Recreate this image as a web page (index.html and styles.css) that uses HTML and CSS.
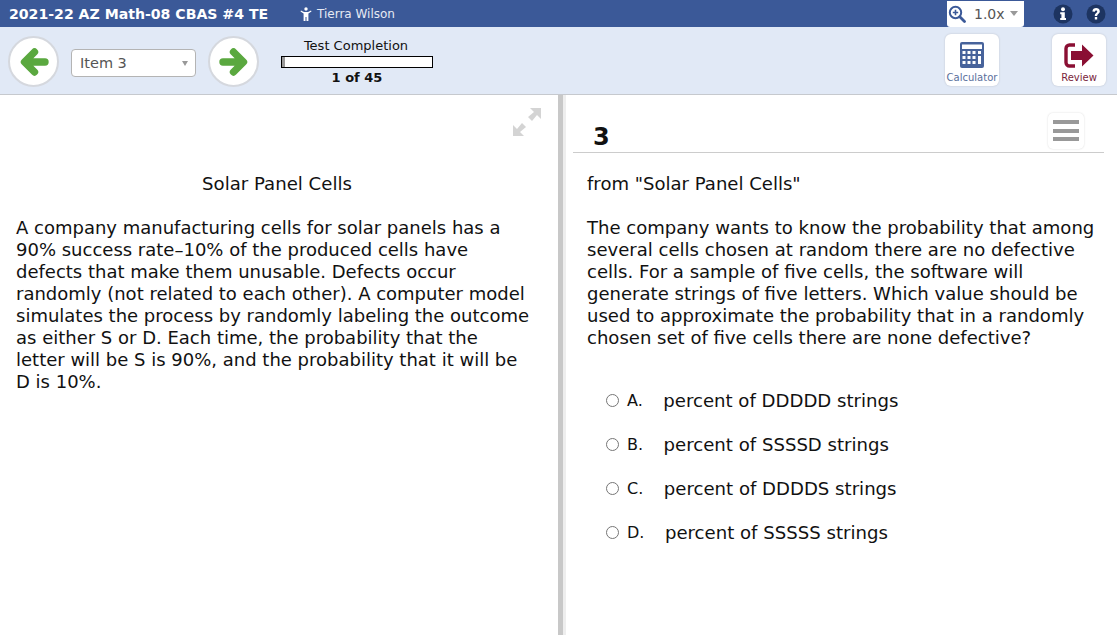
FILE: index.html
```html
<!DOCTYPE html>
<html lang="en">
<head>
    <meta charset="UTF-8">
    <meta name="viewport" content="width=device-width, initial-scale=1.0">
    <title>Test Item</title>
    <link rel="stylesheet" href="styles.css">
</head>
<body>
    <header class="topbar">
        <div class="test-name">2021-22 AZ Math-08 CBAS #4 TE</div>
        <div class="student">
            <svg class="student-icon" viewBox="0 0 12 14" width="12" height="14"><circle cx="6" cy="2" r="1.7" fill="#fff"/><path d="M1 3.5 L4 5 H8 L11 3.5 L11.5 4.6 L8.4 6.6 V9 L8.4 14 H6.5 V10 H5.5 V14 H3.6 V6.6 L0.5 4.6 Z" fill="#fff"/></svg>
            <span>Tierra Wilson</span>
        </div>
        <div class="zoom-box">
            <svg viewBox="0 0 18 18" width="18" height="18"><circle cx="7.5" cy="7.5" r="5.7" fill="none" stroke="#3b5998" stroke-width="2"/><path d="M11.8 11.8 L16.5 16.5" stroke="#3b5998" stroke-width="2.8" stroke-linecap="round"/><path d="M7.5 4.8 V10.2 M4.8 7.5 H10.2" stroke="#3b5998" stroke-width="1.6"/></svg>
            <span class="zoom-value">1.0x</span>
            <span class="caret"></span>
        </div>
        <div class="help-icons">
            <svg viewBox="0 0 20 20" width="20" height="20"><circle cx="10" cy="10" r="9.5" fill="#1d3461"/><circle cx="10" cy="5.2" r="2" fill="#fff"/><path d="M7.2 8.2 H11.8 V14 H13 V16 H7.2 V14 H8.4 V10.2 H7.2 Z" fill="#fff"/></svg>
            <svg viewBox="0 0 20 20" width="20" height="20"><circle cx="10" cy="10" r="9.5" fill="#1d3461"/><path d="M6.4 7.4 C6.4 2.9 13.8 2.9 13.8 7.3 C13.8 10 11.2 9.8 11.2 12 H8.8 C8.8 8.8 11.2 9 11.2 7.4 C11.2 6 9 6 8.9 7.8 Z" fill="#fff"/><rect x="8.8" y="13" width="2.4" height="2.5" fill="#fff"/></svg>
        </div>
    </header>

    <div class="toolbar">
        <button class="nav-btn" type="button">
            <svg viewBox="0 0 30 30" width="30" height="30"><path d="M15.5 5 L5.5 15 L15.5 25 M6 15 H26" fill="none" stroke="#5aa83f" stroke-width="7.4" stroke-linejoin="round" stroke-linecap="round"/></svg>
        </button>
        <div class="item-select">
            <span>Item 3</span>
            <span class="caret"></span>
        </div>
        <button class="nav-btn" type="button">
            <svg viewBox="0 0 30 30" width="30" height="30"><path d="M14.5 5 L24.5 15 L14.5 25 M24 15 H4" fill="none" stroke="#5aa83f" stroke-width="7.4" stroke-linejoin="round" stroke-linecap="round"/></svg>
        </button>
        <div class="completion">
            <div class="completion-label">Test Completion</div>
            <div class="completion-bar"><div class="completion-fill"></div></div>
            <div class="completion-count">1 of 45</div>
        </div>
        <div class="tool-btn calculator">
            <svg viewBox="0 0 24 26" width="24" height="26">
                <path d="M2 0 H22 A2 2 0 0 1 24 2 V24 A2 2 0 0 1 22 26 H2 A2 2 0 0 1 0 24 V2 A2 2 0 0 1 2 0 Z" fill="#47639b"/>
                <rect x="2" y="2.5" width="20" height="4.5" fill="#fff"/>
                <g fill="#fff">
                    <rect x="2.5" y="9" width="3" height="3"/><rect x="7.5" y="9" width="3" height="3"/><rect x="12.5" y="9" width="3" height="3"/><rect x="18" y="9" width="3" height="3"/>
                    <rect x="2.5" y="14" width="3" height="3"/><rect x="7.5" y="14" width="3" height="3"/><rect x="12.5" y="14" width="3" height="3"/><rect x="18" y="14" width="3" height="8"/>
                    <rect x="2.5" y="19" width="3" height="3"/><rect x="7.5" y="19" width="3" height="3"/><rect x="12.5" y="19" width="3" height="3"/>
                </g>
            </svg>
            <span>Calculator</span>
        </div>
        <div class="tool-btn review">
            <svg viewBox="0 0 30 26" width="30" height="26">
                <path d="M11 3 H5.5 A3.5 3.5 0 0 0 2 6.5 V20.5 A3.5 3.5 0 0 0 5.5 24 H11" fill="none" stroke="#8a0f33" stroke-width="3.4"/>
                <path d="M7 9 H18 V2.5 L29.5 13.5 L18 24.5 V18 H7 Z" fill="#8a0f33"/>
            </svg>
            <span>Review</span>
        </div>
    </div>

    <main class="panes">
        <section class="passage">
            <div class="expand-row">
                <svg viewBox="0 0 30 30" width="30" height="30"><g fill="#d4d4d4"><path d="M29 1 V12 L25 8 L20 14 L16 10 L22 5 L18 1 Z"/><path d="M1 29 V18 L5 22 L10 16 L14 20 L8 25 L12 29 Z"/></g></svg>
            </div>
            <h2 class="passage-title">Solar Panel Cells</h2>
            <p class="passage-text">A company manufacturing cells for solar panels has a 90% success rate–10% of the produced cells have defects that make them unusable. Defects occur randomly (not related to each other). A computer model simulates the process by randomly labeling the outcome as either S or D. Each time, the probability that the letter will be S is 90%, and the probability that it will be D is 10%.</p>
        </section>
        <div class="divider"></div>
        <section class="question">
            <div class="question-head">
                <span class="question-number">3</span>
                <div class="menu-btn"><span></span><span></span><span></span></div>
            </div>
            <p class="question-source">from "Solar Panel Cells"</p>
            <p class="question-text">The company wants to know the probability that among several cells chosen at random there are no defective cells. For a sample of five cells, the software will generate strings of five letters. Which value should be used to approximate the probability that in a randomly chosen set of five cells there are none defective?</p>
            <ul class="choices">
                <li class="choice"><span class="radio"></span><span class="letter">A.</span><span>percent of DDDDD strings</span></li>
                <li class="choice"><span class="radio"></span><span class="letter">B.</span><span>percent of SSSSD strings</span></li>
                <li class="choice"><span class="radio"></span><span class="letter">C.</span><span>percent of DDDDS strings</span></li>
                <li class="choice"><span class="radio"></span><span class="letter">D.</span><span>percent of SSSSS strings</span></li>
            </ul>
        </section>
    </main>
</body>
</html>
```

FILE: styles.css
```css
* {
    box-sizing: border-box;
}
html, body {
    height: 100%;
}
body {
    margin: 0;
    display: flex;
    flex-direction: column;
    height: 635px;
    overflow: hidden;
    background-color: #fff;
    color: #111;
    font-family: "DejaVu Sans", Verdana, sans-serif;
}

/* top bar */
.topbar {
    display: flex;
    align-items: center;
    height: 27px;
    padding-left: 9px;
    background-color: #3b5998;
    color: #fff;
}
.test-name {
    width: 291px;
    font-size: 14.1px;
    font-weight: bold;
}
.student {
    display: flex;
    align-items: center;
    gap: 5px;
    font-size: 12px;
    color: #e6eaf4;
}
.zoom-box {
    display: flex;
    align-items: center;
    width: 77px;
    height: 26px;
    margin-left: auto;
    margin-right: 29px;
    padding-left: 1px;
    background-color: #fff;
    border-radius: 0 0 3px 3px;
    color: #555;
    font-size: 14px;
}
.zoom-value {
    margin-left: 8px;
    margin-right: 5px;
}
.caret {
    width: 0;
    height: 0;
    border-left: 4px solid transparent;
    border-right: 4px solid transparent;
    border-top: 5px solid #999;
}
.help-icons {
    display: flex;
    gap: 13px;
    margin-right: 11px;
}

/* tool bar */
.toolbar {
    display: flex;
    align-items: center;
    height: 68px;
    padding-left: 8px;
    background-color: #e1e9f6;
    border-bottom: 1px solid #c6c9ce;
}
.nav-btn {
    display: flex;
    align-items: center;
    justify-content: center;
    width: 51px;
    height: 51px;
    margin-top: 2px;
    padding: 0;
    background-color: #fff;
    border: 2px solid #d5d8de;
    border-radius: 50%;
}
.item-select {
    display: flex;
    align-items: center;
    justify-content: space-between;
    width: 125px;
    height: 28px;
    margin: 4px 12px 0;
    padding: 1px 7px 0 8px;
    background-color: #fff;
    border: 1px solid #b4b4b4;
    border-radius: 4px;
    color: #555;
    font-size: 14.5px;
}
.item-select .caret {
    border-left-width: 3.5px;
    border-right-width: 3.5px;
    border-top-width: 5px;
}
.completion {
    width: 152px;
    margin-top: 3px;
    margin-left: 22px;
    text-align: center;
    font-size: 13px;
}
.completion-label {
    padding-right: 2px;
    line-height: 16px;
}
.completion-bar {
    height: 12px;
    margin: 2px 0 1px;
    background-color: #fff;
    border: 1px solid #000;
}
.completion-fill {
    width: 3px;
    height: 100%;
    background-color: #999;
}
.completion-count {
    font-weight: bold;
    line-height: 18px;
}
.tool-btn {
    display: flex;
    flex-direction: column;
    align-items: center;
    width: 54px;
    height: 52px;
    margin-top: -2px;
    padding-top: 8px;
    background-color: #fff;
    border-radius: 6px;
    box-shadow: 0 0 2px #b9bec8;
    font-size: 10px;
}
.tool-btn span {
    margin-top: 3px;
    line-height: 13px;
}
.calculator {
    margin-left: auto;
    margin-right: 53px;
    color: #5a6f9c;
}
.review {
    margin-right: 11px;
    color: #7a1f3c;
}

/* panes */
.panes {
    display: flex;
    flex: 1;
    min-height: 0;
}
.passage {
    width: 558px;
    padding: 0 27px 0 16px;
}
.expand-row {
    display: flex;
    justify-content: flex-end;
    height: 78px;
    padding: 12px 0 0;
    margin-right: -11px;
}
.passage-title {
    margin: 0 -7px 22px 0;
    font-size: 18.12px;
    font-weight: normal;
    line-height: 22px;
    text-align: center;
}
.passage-text {
    margin: 0;
    font-size: 18px;
    line-height: 22px;
}
.question-source, .question-text {
    margin: 0;
    font-size: 18.06px;
    line-height: 22px;
}
.divider {
    width: 8px;
    background: linear-gradient(to right, #c8c8c8 5px, #eeeeee 5px);
}
.question {
    flex: 1;
    padding: 0 13px 0 7px;
}
.question-head {
    display: flex;
    align-items: center;
    justify-content: space-between;
    height: 58px;
    padding: 0 20px 0 20px;
    border-bottom: 1px solid #ccc;
}
.question-number {
    margin-top: 26px;
    font-size: 24px;
    font-weight: bold;
}
.menu-btn {
    display: flex;
    flex-direction: column;
    justify-content: center;
    gap: 4.5px;
    width: 36px;
    height: 36px;
    margin-top: 14px;
    padding: 0 5px;
    background-color: #fff;
    border-radius: 5px;
    box-shadow: 0 0 2px #d8d8d8;
}
.menu-btn span {
    height: 4px;
    background-color: #999;
}
.question-source {
    margin: 20px 0 22px;
    padding-left: 14px;
}
.question-text {
    padding-left: 14px;
}
.choices {
    margin: 29px 0 0;
    padding: 0 0 0 33px;
    list-style: none;
}
.choice {
    display: flex;
    align-items: center;
    height: 44px;
    font-size: 18.12px;
}
.radio {
    width: 13px;
    height: 13px;
    margin-right: 8px;
    background-color: #fff;
    border: 1px solid #767676;
    border-radius: 50%;
}
.letter {
    padding-right: 20.5px;
    font-size: 16px;
}
```
